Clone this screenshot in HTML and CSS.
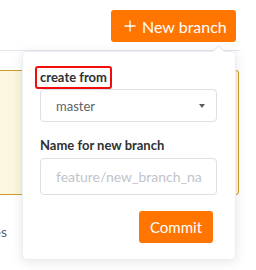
FILE: index.html
```html
<!DOCTYPE html>
<html>
<head>
    <meta charset="UTF-8">
    <title>New branch</title>
    <link rel="stylesheet" href="styles.css">
</head>
    <body>
        <div class="toolbar">
            <button type="button" class="btn btn-new">
                <svg class="plus" width="12" height="12" viewBox="0 0 12 12"><path d="M6 0.5V11.5M0.5 6H11.5" stroke="#fff" stroke-width="1.3" fill="none"/></svg>
                New branch
            </button>
        </div>

        <div class="notice"></div>

        <div class="trailing"><span>Branches</span></div>

        <div class="popover">
            <div class="field">
                <span class="label label-marked">create from</span>
                <div class="select">
                    <span>master</span>
                    <span class="caret"></span>
                </div>
            </div>
            <div class="field">
                <span class="label">Name for new branch</span>
                <input type="text" class="input" placeholder="feature/new_branch_name" />
            </div>
            <div class="actions">
                <button type="button" class="btn btn-commit">Commit</button>
            </div>
        </div>
    </body>
</html>
```

FILE: styles.css
```css
*
{
    box-sizing: border-box;
    font-family: 'Lato', 'Open Sans', sans-serif;
}

body
{
    margin: 0;
    width: 256px;
    height: 270px;
    overflow: hidden;
    background-color: #fff;
    position: relative;
}

.toolbar
{
    display: flex;
    justify-content: flex-end;
    height: 51px;
    padding: 10px 4px 0 0;
    margin-right: 16px;
    border-bottom: 1px solid #e4e7ed;
}

.btn
{
    border: none;
    border-radius: 3px;
    background-color: #ff7500;
    color: #fff;
    cursor: pointer;
}

.btn-new
{
    display: flex;
    align-items: center;
    gap: 6px;
    width: 125px;
    height: 32px;
    padding: 0 0 0 13px;
    font-size: 16px;
}

.notice
{
    margin: 19px 0 0 -10px;
    width: 249px;
    height: 125px;
    background-color: #fdf6de;
    border: 1px solid #cf9d2a;
    border-radius: 3px;
}

.trailing
{
    width: 200px;
    margin: 28px 0 0 -193px;
    text-align: right;
    font-size: 14px;
    color: #5e6470;
}

.popover
{
    position: absolute;
    left: 22px;
    top: 51px;
    width: 214px;
    height: 209px;
    padding: 14px 18px 0 17px;
    background-color: #fff;
    border: 1px solid #ebeef5;
    border-radius: 4px;
    box-shadow: 0 2px 12px rgba(0, 0, 0, 0.1);
}

.popover::before
{
    content: "";
    position: absolute;
    right: 12px;
    top: -5px;
    width: 8px;
    height: 8px;
    background-color: #fff;
    border-left: 1px solid #e4e7ed;
    border-top: 1px solid #e4e7ed;
    transform: rotate(45deg);
}

.field
{
    display: flex;
    flex-direction: column;
    align-items: flex-start;
}

.label
{
    font-size: 13px;
    font-weight: bold;
    line-height: 19px;
    color: #303133;
    margin: 14px 0 3px;
}

.label-marked
{
    margin: 0 0 0 -5px;
    padding: 0 3px;
    border: 2px solid #f20d0d;
    border-radius: 3px;
}

.select
{
    display: flex;
    align-items: center;
    justify-content: space-between;
    width: 177px;
    height: 33px;
    padding: 0 11px 0 15px;
    border: 1px solid #dcdfe6;
    border-radius: 4px;
    font-size: 13px;
    color: #606266;
}

.caret
{
    width: 0;
    height: 0;
    border-left: 3.5px solid transparent;
    border-right: 3.5px solid transparent;
    border-top: 4px solid #5a5e66;
}

.input
{
    width: 177px;
    height: 37px;
    padding: 0 14px 0 15px;
    border: 1px solid #dcdfe6;
    border-radius: 4px;
    font-size: 14px;
    outline: none;
}

.input::placeholder
{
    color: #c0c4cc;
}

.actions
{
    display: flex;
    justify-content: flex-end;
    margin: 16px 4px 0 0;
}

.btn-commit
{
    width: 74px;
    height: 32px;
    font-size: 15px;
}
```
